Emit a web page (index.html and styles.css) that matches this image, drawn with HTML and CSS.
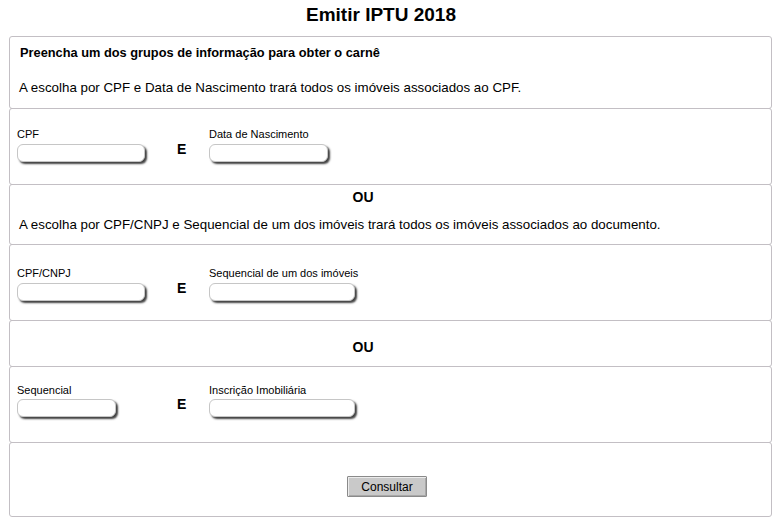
FILE: index.html
```html
<!DOCTYPE html>
<html lang="pt-BR">
<head>
<meta charset="utf-8">
<title>Emitir IPTU 2018</title>
<link rel="stylesheet" href="styles.css">
</head>
<body>
<h1 class="title">Emitir IPTU 2018</h1>
<div class="panel">
  <div class="sec sec-intro">
    <p class="lead">Preencha um dos grupos de informação para obter o carnê</p>
    <p class="info info-first">A escolha por CPF e Data de Nascimento trará todos os imóveis associados ao CPF.</p>
  </div>
  <div class="sec sec-fields sec-b">
    <div class="field f1">
      <label class="lbl">CPF</label>
      <input class="inp w128" type="text">
    </div>
    <span class="and">E</span>
    <div class="field">
      <label class="lbl">Data de Nascimento</label>
      <input class="inp w119" type="text">
    </div>
  </div>
  <div class="sec sec-or sec-or1">
    <div class="ou">OU</div>
    <p class="info info-second">A escolha por CPF/CNPJ e Sequencial de um dos imóveis trará todos os imóveis associados ao documento.</p>
  </div>
  <div class="sec sec-fields sec-d">
    <div class="field f1">
      <label class="lbl">CPF/CNPJ</label>
      <input class="inp w128" type="text">
    </div>
    <span class="and">E</span>
    <div class="field">
      <label class="lbl">Sequencial de um dos imóveis</label>
      <input class="inp w146" type="text">
    </div>
  </div>
  <div class="sec sec-or sec-or2">
    <div class="ou">OU</div>
  </div>
  <div class="sec sec-fields sec-f">
    <div class="field f1">
      <label class="lbl">Sequencial</label>
      <input class="inp w99" type="text">
    </div>
    <span class="and">E</span>
    <div class="field">
      <label class="lbl">Inscrição Imobiliária</label>
      <input class="inp w146" type="text">
    </div>
  </div>
  <div class="sec sec-actions">
    <button class="btn" type="button">Consultar</button>
  </div>
</div>
</body>
</html>
```
FILE: styles.css
```css
* { box-sizing: border-box; }

body {
  margin: 0;
  background: #ffffff;
  color: #000000;
  font-family: "Liberation Sans", Arial, sans-serif;
}

.title {
  margin: 4px 0 0;
  padding-right: 19px;
  font-size: 19px;
  line-height: 22px;
  font-weight: bold;
  text-align: center;
}

.panel {
  margin: 10px 9px 0;
  display: flex;
  flex-direction: column;
}

.sec {
  border: 1px solid #c3bfc4;
  border-radius: 3px;
  margin-top: -1px;
}
.sec:first-child { margin-top: 0; }

.sec-intro { padding: 8px 10px 12px 9px; }

.lead {
  margin: 0 0 19px;
  font-size: 12.8px;
  line-height: 16px;
  font-weight: bold;
  padding-left: 1px;
}

.info {
  margin: 0;
  font-size: 13.33px;
  line-height: 16px;
}

.sec-or { padding-left: 9px; padding-right: 10px; }
.sec-or1 { padding-top: 4px; padding-bottom: 11px; }
.sec-or1 .info { margin-top: 12px; }
.sec-or2 { padding-top: 18px; padding-bottom: 11px; }

.ou {
  padding-right: 54px;
  font-size: 14px;
  line-height: 16px;
  font-weight: bold;
  text-align: center;
}

.sec-fields {
  display: flex;
  align-items: flex-end;
  padding-left: 7px;
  padding-right: 7px;
}
.sec-b { padding-top: 19px; padding-bottom: 22px; }
.sec-d { padding-top: 22px; padding-bottom: 19px; }
.sec-f { padding-top: 17px; padding-bottom: 25px; }

.field { display: flex; flex-direction: column; }
.f1 { width: 160px; }

.lbl {
  display: block;
  font-size: 11px;
  line-height: 13px;
  margin-bottom: 3px;
}
.sec-f .lbl { margin-bottom: 2px; }

.inp {
  display: block;
  height: 18px;
  border: 1px solid #c6c6c6;
  border-radius: 6px;
  background: #ffffff;
  box-shadow: 2px 2px 2px rgba(0, 0, 0, 0.75);
  padding: 0 4px;
  font: 12px "Liberation Sans", Arial, sans-serif;
}
.w128 { width: 128px; }
.w119 { width: 119px; }
.w146 { width: 146px; }
.w99 { width: 99px; }

.and {
  width: 32px;
  font-size: 14px;
  line-height: 16px;
  font-weight: bold;
  margin-bottom: 5px;
}

.sec-actions {
  display: flex;
  justify-content: center;
  padding: 33px 7px 19px 0;
}

.btn {
  width: 80px;
  height: 21px;
  padding: 0;
  border: 1px solid #8a8a8a;
  border-radius: 1px;
  background: #c9c9c9;
  box-shadow: inset 1px 1px 0 #ececec, inset -1px -1px 0 #a8a8a8;
  color: #000000;
  font: 12px "Liberation Sans", Arial, sans-serif;
}
```
